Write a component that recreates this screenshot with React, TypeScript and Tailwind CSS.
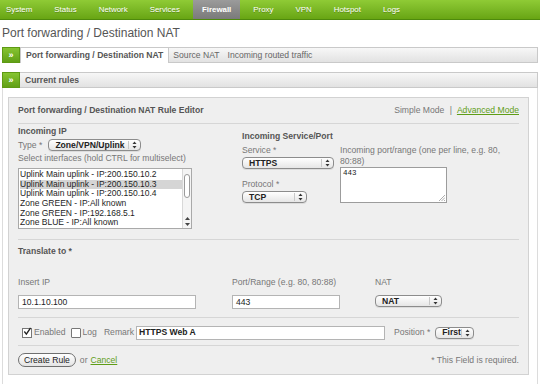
import React from 'react'

const navItems = ['System', 'Status', 'Network', 'Services', 'Firewall', 'Proxy', 'VPN', 'Hotspot', 'Logs']

const interfaces = [
  'Uplink Main uplink - IP:200.150.10.2',
  'Uplink Main uplink - IP:200.150.10.3',
  'Uplink Main uplink - IP:200.150.10.4',
  'Zone GREEN - IP:All known',
  'Zone GREEN - IP:192.168.5.1',
  'Zone BLUE - IP:All known',
]

function Arrows() {
  return (
    <svg width="5" height="8" viewBox="0 0 5 8" className="shrink-0">
      <path d="M2.5 0.5 L4.5 3 L0.5 3 Z" fill="#333" />
      <path d="M2.5 7.5 L4.5 5 L0.5 5 Z" fill="#333" />
    </svg>
  )
}

function PopSelect({ value, w, h = 12 }: { value: string; w: string; h?: number }) {
  return (
    <div
      className={`${w} flex items-center justify-between rounded-[4px] border border-[#8c8c8c] bg-gradient-to-b from-white to-[#e6e6e6] pl-[6px] pr-[3px] shadow-[0_1px_0_rgba(0,0,0,0.08)]`}
      style={{ height: h }}
    >
      <span className="text-[8.6px] font-bold leading-none text-[#222]">{value}</span>
      <div className="flex h-full items-center gap-[3px]">
        <div className="h-[8px] w-px bg-[#c8c8c8]" />
        <Arrows />
      </div>
    </div>
  )
}

function Bar({ children }: { children: React.ReactNode }) {
  return (
    <div className="mx-[2px] flex h-[16px] w-[536px]">
      <div className="flex w-[18px] items-center justify-center border border-[#5e9a14] bg-gradient-to-b from-[#86c431] to-[#61a016] text-[9px] font-bold leading-none text-white">
        »
      </div>
      <div className="flex flex-1 items-stretch border-y border-r border-[#c9c9c9] bg-gradient-to-b from-[#f7f7f7] to-[#e2e2e2]">
        {children}
      </div>
    </div>
  )
}

export default function App() {
  return (
    <div className="h-[384px] w-[540px] overflow-hidden bg-white font-['Liberation_Sans',Arial,sans-serif] text-[8.6px] text-[#777]">
      {/* top nav */}
      <div className="flex h-[20px] items-stretch gap-[22px] border-b border-[#4e8a0c] bg-gradient-to-b from-[#8fcb35] to-[#68a513] pl-[6px]">
        {navItems.map((n) => (
          <div
            key={n}
            className={
              n === 'Firewall'
                ? '-mx-[9px] flex items-center bg-gradient-to-b from-[#9b9b9b] to-[#7a7a7a] px-[9px] text-[7.9px] font-bold text-white'
                : 'flex items-center text-[7.9px] text-white [text-shadow:0_1px_0_rgba(0,0,0,0.25)]'
            }
          >
            {n}
          </div>
        ))}
      </div>

      {/* title */}
      <div className="h-[27px] pl-[2px] pt-[6px] text-[12px] leading-[14px] text-[#555]">Port forwarding / Destination NAT</div>

      {/* tabs */}
      <Bar>
        <div className="-my-px flex items-center border-x border-t border-[#c9c9c9] bg-white px-[5px] font-bold text-[#555]">
          Port forwarding / Destination NAT
        </div>
        <div className="flex items-center px-[4px] text-[#666]">Source NAT</div>
        <div className="flex items-center px-[4px] text-[#666]">Incoming routed traffic</div>
      </Bar>

      <div className="h-[9px]" />

      <Bar>
        <div className="flex items-center pl-[5px] font-bold text-[#555]">Current rules</div>
      </Bar>

      {/* content container */}
      <div className="mx-[2px] h-[300px] w-[536px] border-x border-[#dcdcdc] pl-[5px] pt-[9px]">
        <div className="w-[521px] border border-[#d2d2d2] bg-[#efefef] px-[9px]">
          {/* header */}
          <div className="flex h-[26px] items-center justify-between border-b border-[#d6d6d6]">
            <span className="font-bold text-[#555]">Port forwarding / Destination NAT Rule Editor</span>
            <span className="text-[#777]">
              Simple Mode <span className="mx-[3px]">|</span>{' '}
              <span className="text-[#5f9d17] underline">Advanced Mode</span>
            </span>
          </div>

          {/* incoming */}
          <div className="flex border-b border-[#d6d6d6] pb-[10px]">
            <div className="w-[224px]">
              <div className="mt-[2px] font-bold leading-[11px] text-[#555]">Incoming IP</div>
              <div className="mt-[2px] flex h-[12px] items-center gap-[6px]">
                <span>Type *</span>
                <PopSelect value="Zone/VPN/Uplink" w="w-[93px]" />
              </div>
              <div className="mt-[2px] leading-[11px]">Select interfaces (hold CTRL for multiselect)</div>
              <div className="mt-[4px] flex h-[61px] w-[174px] overflow-hidden border border-[#a9a9a9] bg-white">
                <div className="flex-1 pt-[1px] pl-[1px]">
                  {interfaces.map((it, i) => (
                    <div
                      key={it}
                      className={`h-[9.7px] text-[8.5px] leading-[9.7px] text-[#1e1e1e] ${i === 1 ? 'bg-[#d5d5d5]' : ''}`}
                    >
                      {it}
                    </div>
                  ))}
                </div>
                <div className="flex w-[9px] flex-col items-center border-l border-[#d8d8d8] bg-[#f4f4f4]">
                  <div className="mt-[5px] h-[24px] w-[6px] rounded-full border border-[#9a9a9a] bg-white" />
                  <div className="mt-auto mb-[2px] flex flex-col items-center gap-[3px]">
                    <svg width="5" height="3" viewBox="0 0 5 3"><path d="M2.5 0 L5 3 L0 3 Z" fill="#444" /></svg>
                    <svg width="5" height="3" viewBox="0 0 5 3"><path d="M2.5 3 L5 0 L0 0 Z" fill="#444" /></svg>
                  </div>
                </div>
              </div>
            </div>

            <div className="flex-1">
              <div className="mt-[7px] font-bold leading-[11px] text-[#555]">Incoming Service/Port</div>
              <div className="mt-[3px] flex gap-[6px]">
                <div className="w-[92px]">
                  <div className="leading-[11px]">Service *</div>
                  <div className="mt-px">
                    <PopSelect value="HTTPS" w="w-[92px]" />
                  </div>
                  <div className="mt-[10px] leading-[11px]">Protocol *</div>
                  <div className="mt-px">
                    <PopSelect value="TCP" w="w-[65px]" />
                  </div>
                </div>
                <div className="w-[172px]">
                  <div className="leading-[11px]">Incoming port/range (one per line, e.g. 80, 80:88)</div>
                  <div className="relative h-[36px] w-[107px] border border-[#9c9c9c] bg-white px-[2px] pt-[1px] font-['Liberation_Mono',monospace] text-[7.5px] leading-[9px] text-[#222]">
                    443
                    <svg width="6" height="6" viewBox="0 0 6 6" className="absolute right-[1px] bottom-[1px]">
                      <path d="M6 0 L0 6 M6 2.5 L2.5 6 M6 5 L5 6" stroke="#999" strokeWidth="0.8" />
                    </svg>
                  </div>
                </div>
              </div>
            </div>
          </div>

          {/* translate */}
          <div className="border-b border-[#d6d6d6] pb-[8px]">
            <div className="mt-[6px] font-bold leading-[11px] text-[#555]">Translate to *</div>
            <div className="mt-[20px] flex">
              <div className="w-[214px]">
                <div className="leading-[11px]">Insert IP</div>
                <div className="mt-[7px] flex h-[14px] w-[178px] items-center border border-[#b4b4b4] bg-white px-[3px] text-[#222]">
                  10.1.10.100
                </div>
              </div>
              <div className="w-[143px]">
                <div className="leading-[11px]">Port/Range (e.g. 80, 80:88)</div>
                <div className="mt-[7px] flex h-[14px] w-[108px] items-center border border-[#b4b4b4] bg-white px-[3px] text-[#222]">
                  443
                </div>
              </div>
              <div>
                <div className="leading-[11px]">NAT</div>
                <div className="mt-[7px]">
                  <PopSelect value="NAT" w="w-[67px]" />
                </div>
              </div>
            </div>
          </div>

          {/* options */}
          <div className="flex h-[28px] items-center border-b border-[#d6d6d6] pt-[2px]">
            <div className="ml-[4px] flex h-[10px] w-[10px] items-center justify-center border border-[#777] bg-white">
              <svg width="9" height="9" viewBox="0 0 9 9" className="-mt-[2px]">
                <path d="M1.5 4.5 L3.8 7.5 L8.5 0.5" fill="none" stroke="#222" strokeWidth="1.5" />
              </svg>
            </div>
            <span className="ml-[2px]">Enabled</span>
            <div className="ml-[5px] h-[10px] w-[10px] rounded-[1px] border border-[#777] bg-white" />
            <span className="ml-[2px]">Log</span>
            <span className="ml-[7px]">Remark</span>
            <div className="ml-[2px] flex h-[14px] w-[249px] items-center border border-[#b4b4b4] bg-white px-[2px] font-bold text-[#222]">
              HTTPS Web A
            </div>
            <span className="ml-[9px]">Position *</span>
            <div className="ml-[5px]">
              <PopSelect value="First" w="w-[39px]" />
            </div>
          </div>

          {/* actions */}
          <div className="flex h-[28px] items-center justify-between">
            <div className="flex items-center">
              <div className="flex h-[14px] items-center rounded-full border border-[#6f6f6f] bg-gradient-to-b from-white to-[#e4e4e4] px-[5px] text-[#222]">
                Create Rule
              </div>
              <span className="ml-[4px]">or</span>
              <span className="ml-[3px] text-[#5f9d17] underline">Cancel</span>
            </div>
            <span>* This Field is required.</span>
          </div>
        </div>
      </div>
    </div>
  )
}
